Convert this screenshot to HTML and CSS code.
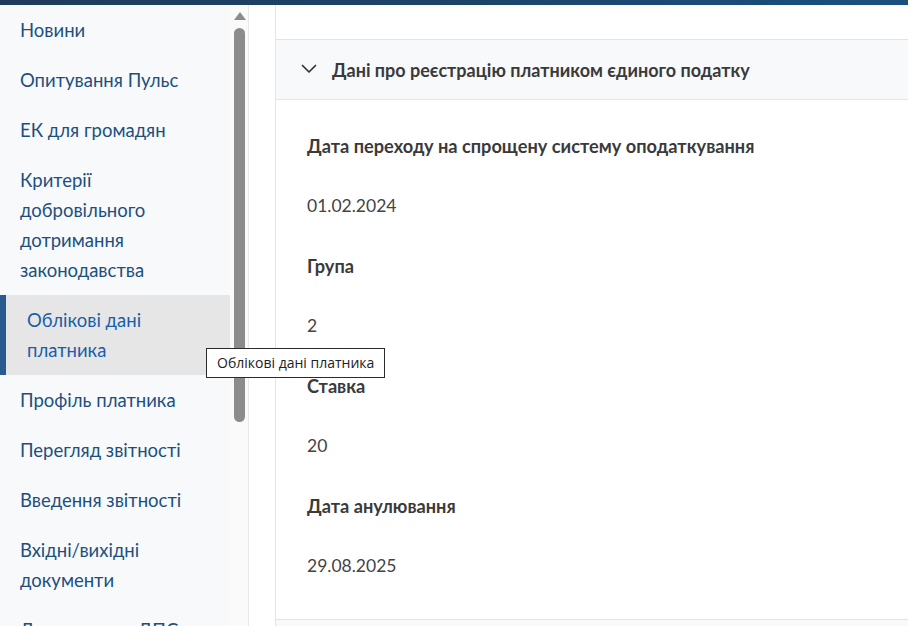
FILE: index.html
```html
<!DOCTYPE html>
<html lang="uk">
<head>
<meta charset="utf-8">
<title>Облікові дані платника</title>
<link rel="stylesheet" href="styles.css">
</head>
<body>
<div class="topbar"></div>
<div class="layout">
  <aside class="sidebar">
    <nav class="menu">
      <a class="item">Новини</a>
      <a class="item">Опитування Пульс</a>
      <a class="item">ЕК для громадян</a>
      <a class="item">Критерії добровільного дотримання законодавства</a>
      <a class="item active">Облікові дані платника</a>
      <a class="item">Профіль платника</a>
      <a class="item">Перегляд звітності</a>
      <a class="item">Введення звітності</a>
      <a class="item">Вхідні/вихідні документи</a>
      <a class="item">Листування з ДПС</a>
    </nav>
    <div class="scrollbar">
      <div class="arrow"></div>
      <div class="thumb"></div>
    </div>
    <div class="tooltip">Облікові дані платника</div>
  </aside>
  <main class="main">
    <section class="panel">
      <div class="panel-top"></div>
      <div class="acc-head">
        <svg class="chev" width="16" height="10" viewBox="0 0 16 10"><path d="M1.5 1.5 L8 8 L14.5 1.5" fill="none" stroke="#333" stroke-width="1.7" stroke-linecap="round" stroke-linejoin="round"/></svg>
        <span class="acc-title">Дані про реєстрацію платником єдиного податку</span>
      </div>
      <div class="acc-body">
        <div class="label">Дата переходу на спрощену систему оподаткування</div>
        <div class="value">01.02.2024</div>
        <div class="label">Група</div>
        <div class="value">2</div>
        <div class="label">Ставка</div>
        <div class="value">20</div>
        <div class="label">Дата анулювання</div>
        <div class="value">29.08.2025</div>
      </div>
      <div class="acc-next"></div>
    </section>
  </main>
</div>
</body>
</html>
```

FILE: styles.css
```css
html, body {
  margin: 0;
  padding: 0;
  height: 100%;
  overflow: hidden;
  background: #ffffff;
  font-family: "Lato", "Noto Sans", sans-serif;
}

.topbar {
  height: 5px;
  background: linear-gradient(90deg, #1f3b5c 0%, #1d4468 50%, #1a5080 100%);
}

.layout {
  display: flex;
  height: 621px;
}

.sidebar {
  position: relative;
  width: 248px;
  flex: 0 0 248px;
  display: flex;
  border-right: 1px solid #e8e9eb;
  background: #fafafa;
}

.menu {
  width: 230px;
  flex: 0 0 230px;
  background: #f7f9fb;
  padding-top: 0;
  overflow: hidden;
}

.item {
  display: block;
  padding: 10px 16px 10px 20px;
  font-size: 18.5px;
  line-height: 30px;
  color: #1d4f7e;
  cursor: pointer;
}

.item.active {
  background: #e6e6e6;
  border-left: 6px solid #285b8f;
  padding-left: 21px;
  color: #1a5ea8;
}

.scrollbar {
  flex: 1;
  display: flex;
  flex-direction: column;
  align-items: center;
  padding-top: 7px;
}

.arrow {
  width: 0;
  height: 0;
  border-left: 6px solid transparent;
  border-right: 6px solid transparent;
  border-bottom: 8px solid #8c8c8c;
  margin-left: 2px;
}

.thumb {
  width: 11px;
  height: 394px;
  margin-top: 8px;
  margin-left: 1px;
  background: #8c8c8c;
  border-radius: 6px;
}

.tooltip {
  position: absolute;
  left: 206px;
  top: 343px;
  z-index: 5;
  padding: 0 10px;
  height: 28px;
  line-height: 28px;
  border: 1px solid #2b2b2b;
  background: #ffffff;
  font-family: "Open Sans", "Noto Sans", sans-serif;
  font-size: 14px;
  color: #222;
  white-space: nowrap;
}

.main {
  flex: 1;
  padding-left: 26px;
  min-width: 0;
}

.panel {
  border-left: 1px solid #e1e4e8;
  height: 100%;
  display: flex;
  flex-direction: column;
}

.panel-top {
  height: 34px;
}

.acc-head {
  height: 59px;
  border-top: 1px solid #e1e4e8;
  border-bottom: 1px solid #e1e4e8;
  background: #f7f9fb;
  display: flex;
  align-items: center;
  padding-left: 25px;
  gap: 15px;
}

.chev {
  display: block;
  margin-top: -2px;
}

.acc-title {
  font-size: 18px;
  font-weight: 700;
  color: #3a3a3a;
}

.acc-body {
  padding: 31px 0 38px 31px;
}

.label {
  font-size: 18.2px;
  line-height: 30px;
  font-weight: 700;
  color: #3a3a3a;
  margin-bottom: 30px;
}

.value {
  font-size: 17.5px;
  line-height: 30px;
  color: #444;
  margin-bottom: 30px;
}

.value:last-child {
  margin-bottom: 0;
}

.acc-next {
  flex: 1;
  border-top: 1px solid #e1e4e8;
  background: #f7f9fb;
}
```
